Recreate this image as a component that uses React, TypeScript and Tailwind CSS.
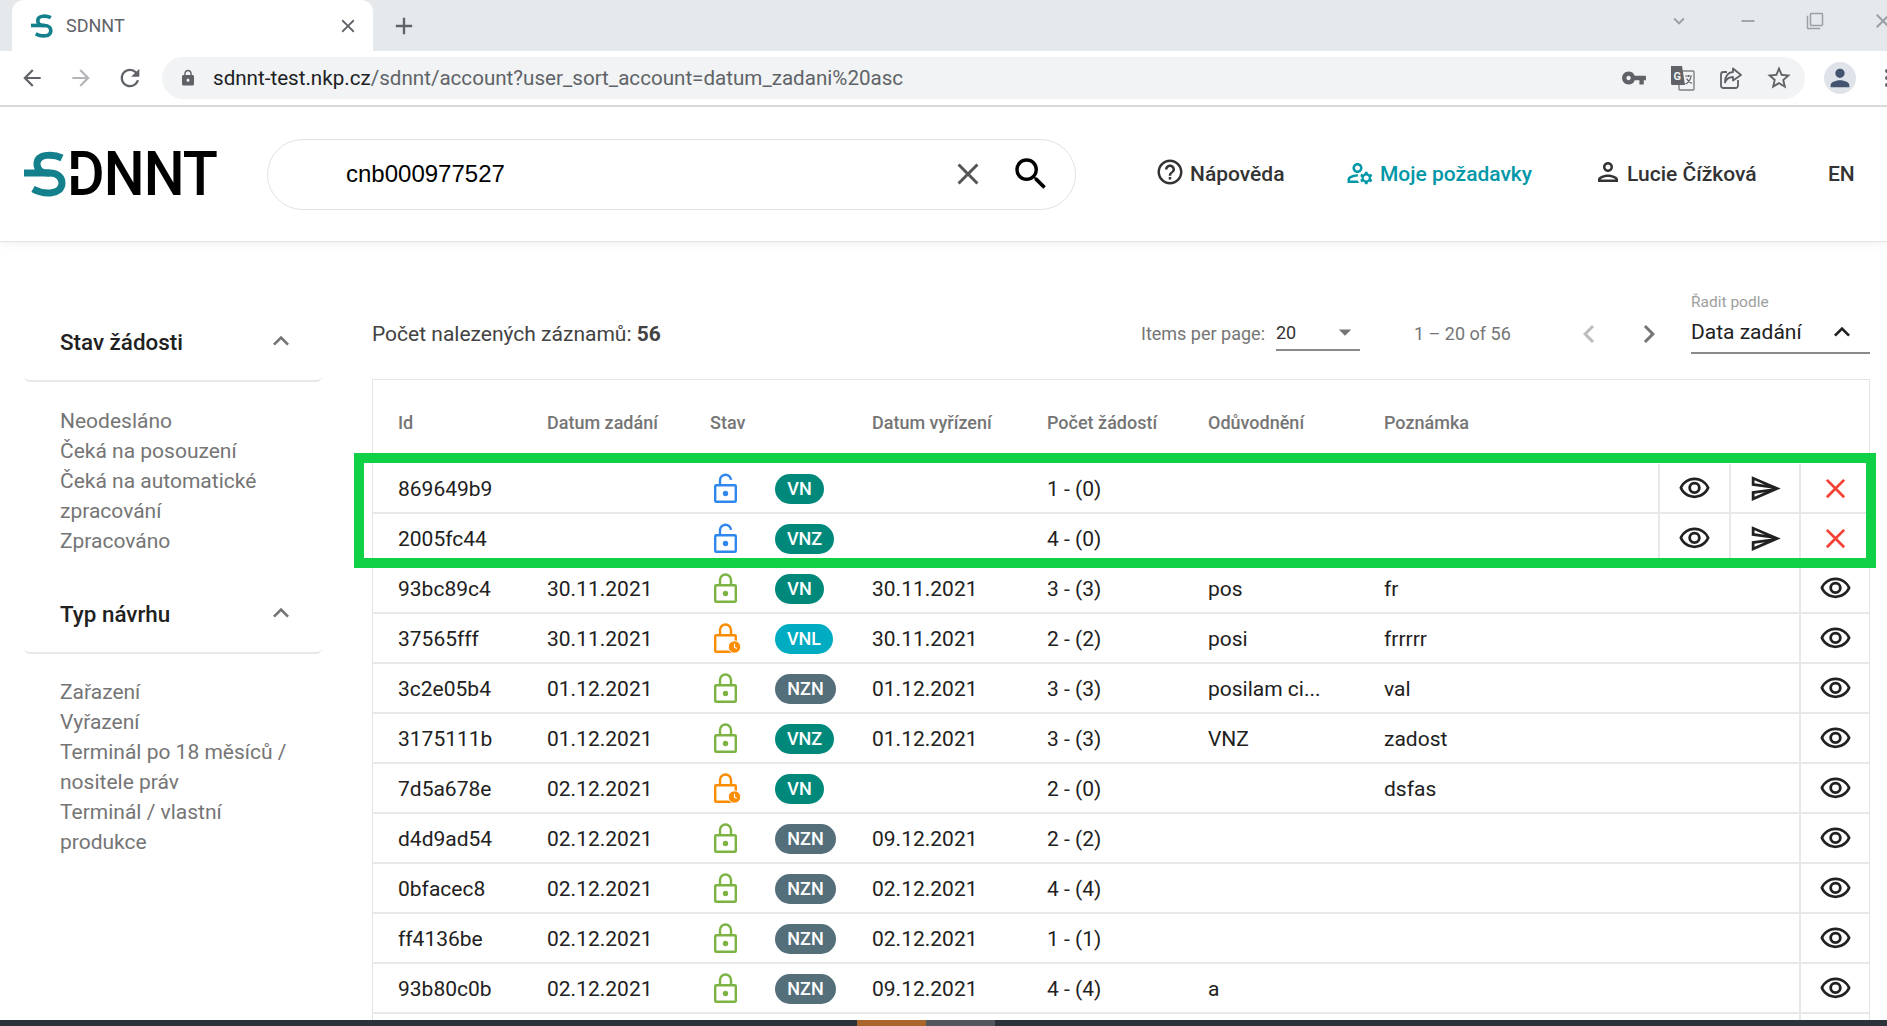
import React from "react";
import {
  MdArrowBack,
  MdArrowDropDown,
  MdArrowForward,
  MdChevronLeft,
  MdChevronRight,
  MdClose,
  MdExpandLess,
  MdOutlineHelpOutline,
  MdOutlineManageAccounts,
  MdOutlinePerson,
  MdOutlineSend,
  MdOutlineVisibility,
  MdOutlineStarBorder,
  MdPerson,
  MdRefresh,
  MdSearch,
  MdLock,
  MdVpnKey,
  MdAdd,
  MdKeyboardArrowDown,
  MdRemove,
  MdOutlineFilterNone,
} from "react-icons/md";

type LockKind = "open" | "closed" | "pending";
type Row = {
  id: string;
  zadani: string;
  lock: LockKind;
  badge: string;
  vyrizeni: string;
  pocet: string;
  oduvodneni: string;
  poznamka: string;
};

const rows: Row[] = [
  { id: "869649b9", zadani: "", lock: "open", badge: "VN", vyrizeni: "", pocet: "1 - (0)", oduvodneni: "", poznamka: "" },
  { id: "2005fc44", zadani: "", lock: "open", badge: "VNZ", vyrizeni: "", pocet: "4 - (0)", oduvodneni: "", poznamka: "" },
  { id: "93bc89c4", zadani: "30.11.2021", lock: "closed", badge: "VN", vyrizeni: "30.11.2021", pocet: "3 - (3)", oduvodneni: "pos", poznamka: "fr" },
  { id: "37565fff", zadani: "30.11.2021", lock: "pending", badge: "VNL", vyrizeni: "30.11.2021", pocet: "2 - (2)", oduvodneni: "posi", poznamka: "frrrrr" },
  { id: "3c2e05b4", zadani: "01.12.2021", lock: "closed", badge: "NZN", vyrizeni: "01.12.2021", pocet: "3 - (3)", oduvodneni: "posilam ci...", poznamka: "val" },
  { id: "3175111b", zadani: "01.12.2021", lock: "closed", badge: "VNZ", vyrizeni: "01.12.2021", pocet: "3 - (3)", oduvodneni: "VNZ", poznamka: "zadost" },
  { id: "7d5a678e", zadani: "02.12.2021", lock: "pending", badge: "VN", vyrizeni: "", pocet: "2 - (0)", oduvodneni: "", poznamka: "dsfas" },
  { id: "d4d9ad54", zadani: "02.12.2021", lock: "closed", badge: "NZN", vyrizeni: "09.12.2021", pocet: "2 - (2)", oduvodneni: "", poznamka: "" },
  { id: "0bfacec8", zadani: "02.12.2021", lock: "closed", badge: "NZN", vyrizeni: "02.12.2021", pocet: "4 - (4)", oduvodneni: "", poznamka: "" },
  { id: "ff4136be", zadani: "02.12.2021", lock: "closed", badge: "NZN", vyrizeni: "02.12.2021", pocet: "1 - (1)", oduvodneni: "", poznamka: "" },
  { id: "93b80c0b", zadani: "02.12.2021", lock: "closed", badge: "NZN", vyrizeni: "09.12.2021", pocet: "4 - (4)", oduvodneni: "a", poznamka: "" },
];

const badgeStyle: Record<string, string> = {
  VN: "bg-[#00897b] w-[49px]",
  VNZ: "bg-[#00897b] w-[59px]",
  VNL: "bg-[#00acc1] w-[58px]",
  NZN: "bg-[#546e7a] w-[61px]",
};

const LockIcon = ({ kind }: { kind: LockKind }) => {
  const color = kind === "open" ? "#2f87ee" : kind === "closed" ? "#7cb342" : "#fb8c00";
  return (
    <svg width="28" height="30" viewBox="0 0 28 30" fill="none" className="shrink-0 -mt-[2px]">
      <rect x="2.2" y="12.2" width="20.6" height="16.6" rx="1" stroke={color} strokeWidth="2.4" />
      {kind === "open" ? (
        <path d="M7 12V7.5a5.5 5.5 0 0 1 11-0.6" stroke={color} strokeWidth="2.4" />
      ) : (
        <path d="M7 12V7a5.5 5.5 0 0 1 11 0v5" stroke={color} strokeWidth="2.4" />
      )}
      {kind === "pending" ? (
        <>
          <circle cx="21.5" cy="24" r="6.2" fill={color} stroke="white" strokeWidth="1" />
          <path d="M21.5 20.8v3.4l2.2 1.4" stroke="white" strokeWidth="1.2" />
        </>
      ) : (
        <circle cx="12.5" cy="20.5" r="2.7" fill={color} />
      )}
    </svg>
  );
};

const TranslateIcon = () => (
  <svg width="26" height="26" viewBox="0 0 26 26" className="shrink-0">
    <rect x="10" y="6" width="15" height="19" rx="1" fill="#f1f3f4" stroke="#7d8186" strokeWidth="1.4" />
    <path d="M2 1H13L16 20H3.5C2.6 20 2 19.4 2 18.5Z" fill="#5f6368" />
    <text x="4.5" y="15" fontSize="11" fontWeight="700" fill="#f1f3f4" fontFamily="Roboto, sans-serif">G</text>
    <path d="M16 11h7M19.5 10v2M22 12c-1 3-3 6-5.5 7M17.5 13.5c1 2 3 4 5.500 5" fill="none" stroke="#5f6368" strokeWidth="1.2" />
  </svg>
);

const ShareIcon = () => (
  <svg width="26" height="26" viewBox="0 0 26 26" fill="none" stroke="#5f6368" strokeWidth="1.8" className="shrink-0">
    <path d="M21 15v5.500a2.500 2.500 0 0 1-2.500 2.500H6.500A2.500 2.500 0 0 1 4 20.500V9.500A2.500 2.500 0 0 1 6.500 7H10" />
    <path d="M16 3.500L24 10L16 15.500V12C12 12 9.500 13.500 8 17.500C8 11.500 11 7.500 16 7Z" strokeLinejoin="round" />
  </svg>
);

const SdnntMark = ({ size, bar = true }: { size: number; bar?: boolean }) => (
  <svg width={size} height={size} viewBox="0 0 46 46" fill="none" stroke="#13808c" strokeWidth="7" className="shrink-0">
    <path d="M38 7C30 3 13 2 13 13C13 19 18 22 24 22H26C34 22 38 27 38 32C38 44 20 44 9 38" />
    {bar && <path d="M0 22H26" />}
  </svg>
);

const Logo = () => (
  <div className="relative flex items-center w-[194px] h-[46px] shrink-0">
    <SdnntMark size={46} />
    <span className="-ml-[3px] font-[Roboto,sans-serif] font-medium text-[62px] leading-[46px] text-black tracking-[-1px] origin-left scale-x-[0.93]">
      DNNT
    </span>
    <span className="absolute left-[43px] top-[18px] w-[12px] h-[7px] bg-white" />
  </div>
);

const Facet = ({ title, items, className, listClass }: { title: string; items: string[]; className?: string; listClass: string }) => (
  <section className={className}>
    <div className="flex items-center justify-between h-[70px] pb-[7px] pl-[36px] pr-[25px] border-b-2 border-[#e8e8e8] rounded-b-md">
      <h3 className="text-[22.4px] font-medium text-[#212121]">{title}</h3>
      <MdExpandLess size={32} className="text-[#757575] -mt-[4px]" />
    </div>
    <ul className={`${listClass} pl-[36px] text-[21px] leading-[30px] text-[#757575]`}>
      {items.map((item) => (
        <li key={item}>{item}</li>
      ))}
    </ul>
  </section>
);

const App = () => {
  return (
    <div className="relative flex flex-col w-[1887px] h-[1026px] overflow-hidden bg-white font-[Roboto,sans-serif]">
      {/* browser tabs */}
      <div className="flex items-end h-[51px] shrink-0 bg-[#e6e9ec] pl-[12px] overflow-hidden">
        <div className="flex items-center w-[361px] h-[51px] shrink-0 bg-white rounded-t-xl pl-[19px] pr-[14px]">
          <SdnntMark size={24} />
          <span className="ml-[11px] text-[18px] text-[#5f6368]">SDNNT</span>
          <MdClose size={22} className="ml-auto text-[#5f6368]" />
        </div>
        <MdAdd size={28} className="ml-[17px] mb-[11px] shrink-0 text-[#5f6368]" />
        <div className="flex items-center ml-[1250px] mb-[18px] text-[#9aa0a6] gap-[47px] w-[240px] shrink-0">
          <MdKeyboardArrowDown size={22} className="shrink-0" />
          <MdRemove size={22} className="shrink-0" />
          <MdOutlineFilterNone size={18} className="shrink-0" />
          <MdClose size={24} className="shrink-0" />
        </div>
      </div>

      {/* browser toolbar */}
      <div className="flex items-center h-[56px] shrink-0 border-b-2 border-[#dcdcdc] pl-[19px] text-[#5f6368]">
        <MdArrowBack size={26} className="shrink-0" />
        <MdArrowForward size={26} className="ml-[23px] shrink-0 text-[#b4b6b9]" />
        <MdRefresh size={28} className="ml-[22px] shrink-0" />
        <div className="flex items-center ml-[18px] w-[1643px] h-[42px] shrink-0 rounded-full bg-[#f1f3f4] pl-[17px] pr-[12px]">
          <MdLock size={18} className="shrink-0" />
          <span className="ml-[16px] text-[20.6px] whitespace-nowrap text-[#5f6368]">
            <span className="text-[#202124]">sdnnt-test.nkp.cz</span>/sdnnt/account?user_sort_account=datum_zadani%20asc
          </span>
          <div className="ml-auto flex items-center gap-[22px]">
            <MdVpnKey size={26} />
            <TranslateIcon />
            <ShareIcon />
            <MdOutlineStarBorder size={28} />
          </div>
        </div>
        <div className="flex items-center justify-center ml-[19px] w-[32px] h-[32px] shrink-0 rounded-full bg-[#e0e3e9]">
          <MdPerson size={28} className="text-[#44546f]" />
        </div>
        <div className="flex flex-col gap-[3px] ml-[29px] shrink-0">
          <span className="w-[4px] h-[4px] rounded-full bg-[#5f6368]" />
          <span className="w-[4px] h-[4px] rounded-full bg-[#5f6368]" />
          <span className="w-[4px] h-[4px] rounded-full bg-[#5f6368]" />
        </div>
      </div>

      {/* app header */}
      <header className="z-10 flex items-center h-[135px] shrink-0 pl-[24px] bg-white border-b border-[#e4e4e4] shadow-[0_2px_8px_rgba(0,0,0,0.06)]">
        <Logo />
        <div className="flex items-center ml-[49px] w-[809px] h-[71px] shrink-0 rounded-full border border-[#e2e2e2] pl-[78px] pr-[23px]">
          <span className="font-['Liberation_Sans',sans-serif] text-[24px] text-black">cnb000977527</span>
          <MdClose size={36} className="ml-auto text-[#555555]" />
          <MdSearch size={42} className="ml-[24px] text-black" />
        </div>
        <nav className="flex items-center ml-[79px] text-[21px] font-medium text-[#333333]">
          <div className="flex items-center gap-[5px] w-[190px]">
            <MdOutlineHelpOutline size={30} className="-mt-[4px]" />
            <span className="pt-[2px]">Nápověda</span>
          </div>
          <div className="flex items-center gap-[5px] w-[250px] text-[#0097a7]">
            <MdOutlineManageAccounts size={30} className="-mt-[2px]" />
            <span className="pt-[2px]">Moje požadavky</span>
          </div>
          <div className="flex items-center gap-[4px] w-[233px] -ml-[2px] pr-[2px] box-content">
            <MdOutlinePerson size={30} className="-mt-[4px]" />
            <span className="pt-[2px]">Lucie Čížková</span>
          </div>
          <span className="pt-[2px]">EN</span>
        </nav>
      </header>

      <main className="flex flex-1 min-h-0 overflow-hidden">
        {/* facets */}
        <aside className="w-[372px] shrink-0 pt-[70px] pl-[24px] pr-[50px]">
          <Facet listClass="mt-[24px]" title="Stav žádosti" items={["Neodesláno", "Čeká na posouzení", "Čeká na automatické", "zpracování", "Zpracováno"]} />
          <Facet
            className="mt-[28px]"
            listClass="mt-[23px]"
            title="Typ návrhu"
            items={["Zařazení", "Vyřazení", "Terminál po 18 měsíců /", "nositele práv", "Terminál / vlastní", "produkce"]}
          />
        </aside>

        <div className="flex flex-col w-[1498px] shrink-0">
          {/* toolbar above the table */}
          <div className="relative flex items-center h-[137px] shrink-0 pt-[47px]">
            <p className="w-[769px] pt-[2px] text-[21px] text-[#424242]">
              Počet nalezených záznamů: <b className="font-bold">56</b>
            </p>
            <span className="w-[135px] -mt-[2px] text-[18px] text-[#757575]">Items per page:</span>
            <div className="flex items-center justify-between w-[84px] h-[34px] pb-[2px] border-b-2 border-[#8a8a8a] text-[18px] text-[#333333]">
              <span>20</span>
              <MdArrowDropDown size={30} className="text-[#757575]" />
            </div>
            <span className="ml-[54px] w-[150px] -mt-[2px] text-[18px] text-[#757575]">1 – 20 of 56</span>
            <MdChevronLeft size={36} className="ml-[7px] text-[#bdbdbd]" />
            <MdChevronRight size={36} className="ml-[24px] text-[#757575]" />
            <div className="ml-[24px] w-[179px] -mt-[23px]">
              <div className="text-[15.500px] leading-[20px] text-[#9e9e9e]">Řadit podle</div>
              <div className="flex items-center justify-between h-[42px] pt-[4px] pb-[2px] border-b-2 border-[#8a8a8a] text-[21px] text-[#212121]">
                <span>Data zadání</span>
                <MdExpandLess size={32} className="mr-[12px] text-[#212121] -mt-[2px]" />
              </div>
            </div>
          </div>

          {/* results table */}
          <div className="relative">
            <table className="w-full table-fixed border-separate border-spacing-0 border border-b-0 border-[#e4e4e4] text-[21px] text-[#212121]">
              <colgroup>
                <col className="w-[149px]" />
                <col className="w-[163px]" />
                <col className="w-[162px]" />
                <col className="w-[175px]" />
                <col className="w-[161px]" />
                <col className="w-[176px]" />
                <col className="w-[299px]" />
                <col className="w-[71px]" />
                <col className="w-[70px]" />
                <col className="w-[70px]" />
              </colgroup>
              <thead>
                <tr className="h-[84px] text-left text-[18px] font-medium text-[#757575]">
                  <th className="pl-[25px] font-medium">Id</th>
                  <th className="pl-[25px] font-medium">Datum zadání</th>
                  <th className="pl-[25px] font-medium">Stav</th>
                  <th className="pl-[25px] font-medium">Datum vyřízení</th>
                  <th className="pl-[25px] font-medium">Počet žádostí</th>
                  <th className="pl-[25px] font-medium">Odůvodnění</th>
                  <th className="pl-[25px] font-medium" colSpan={4}>Poznámka</th>
                </tr>
              </thead>
              <tbody>
                {rows.map((row) => {
                  const editable = row.lock === "open";
                  return (
                    <tr key={row.id} className="h-[50px]">
                      <td className="pl-[25px] pt-[3px] border-b-2 border-[#e8e8e8]">{row.id}</td>
                      <td className="pl-[25px] pt-[3px] border-b-2 border-[#e8e8e8]">{row.zadani}</td>
                      <td className="pl-[25px] pt-[1px] border-b-2 border-[#e8e8e8]">
                        <div className="flex items-center">
                          <span className="w-[65px] pl-[3px] shrink-0">
                            <LockIcon kind={row.lock} />
                          </span>
                          <span className={`flex items-center justify-center h-[30px] rounded-full text-[18px] font-medium text-white ${badgeStyle[row.badge]}`}>
                            {row.badge}
                          </span>
                        </div>
                      </td>
                      <td className="pl-[25px] pt-[3px] border-b-2 border-[#e8e8e8]">{row.vyrizeni}</td>
                      <td className="pl-[25px] pt-[3px] border-b-2 border-[#e8e8e8]">{row.pocet}</td>
                      <td className="pl-[25px] pt-[3px] border-b-2 border-[#e8e8e8]">{row.oduvodneni}</td>
                      {editable ? (
                        <>
                          <td className="pl-[25px] pt-[3px] border-b-2 border-[#e8e8e8]">{row.poznamka}</td>
                          <td className="border-b-2 border-l-2 border-[#e8e8e8]">
                            <MdOutlineVisibility size={33} className="mx-auto" />
                          </td>
                          <td className="border-b-2 border-l-2 border-[#e8e8e8]">
                            <MdOutlineSend size={33} className="mx-auto" />
                          </td>
                          <td className="border-b-2 border-l-2 border-[#e8e8e8]">
                            <MdClose size={33} className="mx-auto text-[#f44336]" />
                          </td>
                        </>
                      ) : (
                        <>
                          <td className="pl-[25px] pt-[3px] border-b-2 border-[#e8e8e8]" colSpan={3}>{row.poznamka}</td>
                          <td className="border-b-2 border-l-2 border-[#e8e8e8]">
                            <MdOutlineVisibility size={33} className="mx-auto" />
                          </td>
                        </>
                      )}
                    </tr>
                  );
                })}
                <tr className="h-[50px]">
                  <td colSpan={9} />
                  <td className="border-l-2 border-[#e8e8e8]" />
                </tr>
              </tbody>
            </table>
            {/* highlight around the two unsent rows */}
            <div className="absolute left-[-18px] top-[74px] w-[1522px] h-[115px] border-[10px] border-[#10d046] pointer-events-none" />
          </div>
        </div>
      </main>

      {/* desktop taskbar strip */}
      <div className="flex h-[6px] shrink-0 bg-[#2b323a] pl-[857px]">
        <span className="w-[69px] bg-[#a9652c]" />
        <span className="w-[69px] bg-[#52575e]" />
      </div>
    </div>
  );
};

export default App;
